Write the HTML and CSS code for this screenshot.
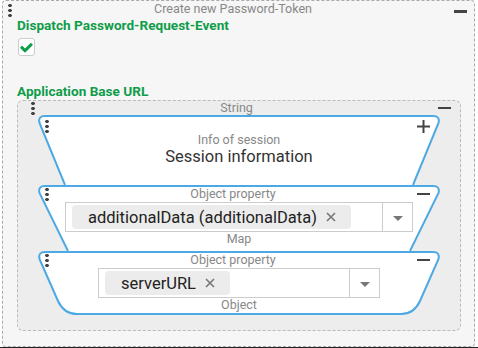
FILE: index.html
```html
<!DOCTYPE html>
<html lang="en">
  <head>
    <meta charset="UTF-8" />
    <title>Create new Password-Token</title>
    <link rel="stylesheet" href="styles.css">
  </head>
  <body>
    <div class="panel">
      <div class="head">
        <span class="grip"></span>
        <span class="head-title">Create new Password-Token</span>
        <span class="minus"></span>
      </div>
      <div class="panel-body">
        <div class="label">Dispatch Password-Request-Event</div>
        <div class="checkbox">
          <svg width="13" height="13" viewBox="100 200 1600 1400">
            <path d="M1671 566q0 40-28 68l-724 724-136 136q-28 28-68 28t-68-28l-136-136-362-362q-28-28-28-68t28-68l136-136q28-28 68-28t68 28l294 295 656-657q28-28 68-28t68 28l136 136q28 28 28 68z" fill="#0f9d4a" />
          </svg>
        </div>
        <div class="label label-url">Application Base URL</div>

        <div class="group">
          <div class="head">
            <span class="grip"></span>
            <span class="head-title">String</span>
            <span class="minus"></span>
          </div>

          <!-- session info -->
          <div class="block block-info">
            <div class="head">
              <span class="grip"></span>
              <span class="head-title"></span>
              <svg class="plus" width="13" height="13" viewBox="0 0 13 13">
                <path d="M6.5 0 V13 M0 6.5 H13" stroke="#444" stroke-width="2" />
              </svg>
            </div>
            <div class="caption">Info of session</div>
            <div class="value">Session information</div>
          </div>

          <!-- additional data -->
          <div class="block block-map">
            <div class="head">
              <span class="grip"></span>
              <span class="head-title">Object property</span>
              <span class="minus"></span>
            </div>
            <div class="select select-wide">
              <div class="select-items">
                <span class="chip">additionalData (additionalData)
                  <svg class="chip-x" width="10" height="10" viewBox="0 0 10 10"><path d="M1 1 L9 9 M9 1 L1 9" stroke="#777" stroke-width="1.6" /></svg>
                </span>
              </div>
              <div class="select-arrow"></div>
            </div>
            <div class="caption">Map</div>
          </div>

          <!-- server url -->
          <div class="block block-object">
            <div class="head">
              <span class="grip"></span>
              <span class="head-title">Object property</span>
              <span class="minus"></span>
            </div>
            <div class="select select-narrow">
              <div class="select-items">
                <span class="chip">serverURL
                  <svg class="chip-x" width="10" height="10" viewBox="0 0 10 10"><path d="M1 1 L9 9 M9 1 L1 9" stroke="#777" stroke-width="1.6" /></svg>
                </span>
              </div>
              <div class="select-arrow"></div>
            </div>
            <div class="caption">Object</div>
          </div>
        </div>
      </div>
    </div>
  </body>
</html>
```

FILE: styles.css
```css
* {
  box-sizing: border-box;
  padding: 0;
  margin: 0;
}

body {
  font-family: Roboto, "Noto Sans", sans-serif;
  background: #fff;
  border-bottom: 1px solid #222;
}

.panel {
  margin-left: 2px;
  width: 473px;
  height: 347px;
  border: 1px dashed #a9a9a9;
  border-radius: 4px;
  background: #f6f6f6;
}

/* shared header row: grip, centered title, button */
.head {
  display: flex;
  align-items: center;
  height: 14px;
}

.head-title {
  flex: 1;
  text-align: center;
  font-size: 12.5px;
  line-height: 14px;
  color: #888;
  white-space: nowrap;
}

.grip {
  width: 4px;
  height: 15px;
  background: radial-gradient(circle, #444 1.5px, transparent 2px) 0 0 / 4px 5px repeat-y;
}

.minus {
  width: 13px;
  height: 2.5px;
  background: #444;
}

.panel > .head {
  height: 16px;
  padding: 0 7px 0 5px;
}

.panel > .head .grip {
  margin-top: 2px;
}

.panel > .head .minus {
  margin-top: 5px;
}

.panel-body {
  padding: 0 13px 0 14px;
}

.label {
  font-size: 13.6px;
  font-weight: bold;
  line-height: 16px;
  color: #0f9d4a;
}

.checkbox {
  display: flex;
  align-items: center;
  justify-content: center;
  width: 17px;
  height: 18px;
  margin: 5px 0 0 1px;
  border: 1px solid #ccc;
  border-radius: 3px;
  background: #fff;
}

.label-url {
  margin-top: 27px;
}

.group {
  margin-top: 1px;
  height: 231px;
  border: 1px dashed #bbb;
  border-radius: 6px;
  background: #ededed;
}

.group > .head {
  padding: 0 9px 0 13px;
}

/* blocks */
.block {
  width: 404px;
  margin-left: 19px;
  background-repeat: no-repeat;
}

.block > .head {
  padding: 0 11px 0 8px;
}

.block-info {
  height: 70px;
  padding-top: 4px;
  background-image: url("data:image/svg+xml,%3Csvg xmlns='http://www.w3.org/2000/svg' width='404' height='70'%3E%3Cpath d='M28 70 L2.5 8 Q0.8 1 8 1 L396 1 Q403.2 1 401.5 8 L376 70' fill='white' stroke='%234da9e3' stroke-width='2'/%3E%3C/svg%3E");
}

.block-map {
  height: 66px;
  padding-top: 2px;
  background-image: url("data:image/svg+xml,%3Csvg xmlns='http://www.w3.org/2000/svg' width='404' height='66'%3E%3Cpath d='M31 66 L2.5 8 Q0.8 1 8 1 L396 1 Q403.2 1 401.5 8 L373 66' fill='white' stroke='%234da9e3' stroke-width='2'/%3E%3C/svg%3E");
}

.block-object {
  height: 64px;
  padding-top: 2px;
  background-image: url("data:image/svg+xml,%3Csvg xmlns='http://www.w3.org/2000/svg' width='404' height='64'%3E%3Cpath d='M2.5 8 L21 50 Q27 63 40 63 L364 63 Q377 63 383 50 L401.5 8 Q403.2 1 396 1 L8 1 Q0.8 1 2.5 8 Z' fill='white' stroke='%234da9e3' stroke-width='2'/%3E%3C/svg%3E");
}

.caption {
  font-size: 12.5px;
  line-height: 14px;
  color: #888;
  text-align: center;
}

.value {
  font-size: 16.5px;
  line-height: 20px;
  color: #333;
  text-align: center;
}

/* select with chips */
.select {
  display: flex;
  height: 30px;
  margin: 1px auto 0;
  border: 1px solid #ccc;
  background: #fff;
}

.select-wide {
  width: 348px;
}

.select-narrow {
  width: 282px;
}

.select-items {
  flex: 1;
  display: flex;
  align-items: center;
  padding-left: 6px;
}

.chip {
  display: flex;
  align-items: center;
  gap: 9px;
  height: 24px;
  padding: 0 15px 0 16px;
  border-radius: 4px;
  background: #ececec;
  font-size: 16.5px;
  color: #222;
  white-space: nowrap;
}

.select-arrow {
  display: flex;
  align-items: center;
  justify-content: center;
  width: 30px;
  border-left: 1px solid #ccc;
}

.select-arrow::after {
  content: "";
  border-left: 5px solid transparent;
  border-right: 5px solid transparent;
  border-top: 5px solid #777;
  margin-top: 2px;
}
```
